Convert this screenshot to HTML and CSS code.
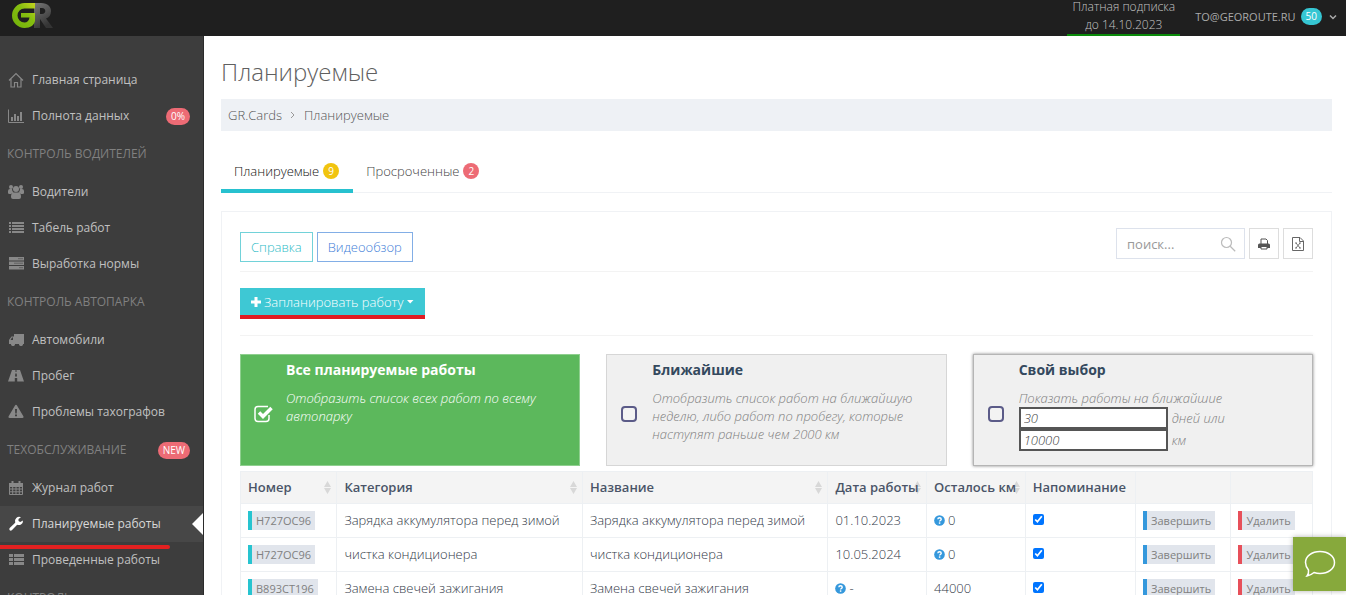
FILE: index.html
```html
<!DOCTYPE html>
<html lang="ru">
<head>
<meta charset="utf-8">
<title>Планируемые</title>
<link rel="stylesheet" href="styles.css">
</head>
<body>
<svg class="sprite" aria-hidden="true">
  <symbol id="i-help" viewBox="0 0 12 12"><circle cx="6" cy="6" r="5.800" fill="#3598dc"/><path d="M4.200 4.700c0-2.300 3.700-2.200 3.700-.1 0 1.400-1.800 1.400-1.800 2.600" fill="none" stroke="#fff" stroke-width="1.500"/><rect x="5.300" y="8" width="1.600" height="1.600" fill="#fff"/></symbol>
</svg>
<header class="topbar">
  <a href="#" class="logo" aria-label="GR">
    <svg width="42" height="28" viewBox="0 0 42 28">
      <defs>
        <linearGradient id="lg" x1="0" y1="1" x2="1" y2="0"><stop offset="0" stop-color="#6fb00a"/><stop offset=".6" stop-color="#86be10"/><stop offset="1" stop-color="#c6d420"/></linearGradient>
        <linearGradient id="lr" x1="0" y1="0" x2=".5" y2="1"><stop offset="0" stop-color="#777"/><stop offset="1" stop-color="#343434"/></linearGradient>
      </defs>
      <path d="M22 0h7c7 0 10 4 10 8 0 4-2 6.500-5 7.500L41 25h-7l-6-9v9h-6zM28 5v6h2c4.500 0 4.500-6 0-6z" fill="url(#lr)" fill-rule="evenodd"/>
      <path d="M23 0H12.500a12.500 12.500 0 0 0 0 25C19 25 22 22 23 18V10H9v4.500h8.500c-.5 3.500-2.500 5-5 5a7 7 0 0 1 0-14H23z" fill="url(#lg)"/>
    </svg>
  </a>
  <div class="plan">Платная подписка<br>до 14.10.2023</div>
  <button class="account" type="button">TO@GEOROUTE.RU <span class="pill pill-cyan">50</span>
    <svg width="8" height="6" viewBox="0 0 8 6"><path d="M1 1.500l3 3 3-3" fill="none" stroke="#aaa" stroke-width="1.500"/></svg>
  </button>
</header>
<div class="page">
  <nav class="sidebar">
    <a href="#" class="item"><svg class="ico" viewBox="0 0 16 16"><path d="M1 8.500L8 1.500l7 7M3 7v8h3.500v-4.500h3V15H13V7" fill="none" stroke="currentColor" stroke-width="1.200"/></svg>Главная страница</a>
    <a href="#" class="item"><svg class="ico" viewBox="0 0 16 16"><path d="M.5 1.500v13H16" fill="none" stroke="currentColor"/><path d="M3 9h2v4H3zM6 6h2v7H6zM9 8h2v5H9zM12 4h2v9h-2z" fill="currentColor"/></svg>Полнота данных<span class="pill pill-red end">0%</span></a>
    <h3 class="group">КОНТРОЛЬ ВОДИТЕЛЕЙ</h3>
    <a href="#" class="item"><svg class="ico" viewBox="0 0 16 16"><g fill="currentColor"><circle cx="3" cy="3" r="2"/><circle cx="13" cy="3" r="2"/><circle cx="8" cy="5" r="3"/><path d="M0 9V7q0-2 2-2h2q0 2 1.500 3.500Q4 8.500 3 10H1.500Q0 10 0 9zM16 9V7q0-2-2-2h-2q0 2-1.500 3.500Q12 8.500 13 10h1.500Q16 10 16 9zM3 13q0-4.500 2.500-4.500h5Q13 8.500 13 13q0 2-2 2H5q-2 0-2-2z"/></g></svg>Водители</a>
    <a href="#" class="item"><svg class="ico" viewBox="0 0 16 16"><path d="M1 2h2v2H1zM4 2h12v2H4zM1 5h2v2H1zM4 5h12v2H4zM1 8h2v2H1zM4 8h12v2H4zM1 11h2v2H1zM4 11h12v2H4z" fill="currentColor"/></svg>Табель работ</a>
    <a href="#" class="item"><svg class="ico" viewBox="0 0 16 16"><path d="M1 1h15v3.500H1zM1 5.500h15V9H1zM1 10h15v3.500H1z" fill="currentColor"/><path d="M10 2.700h5M6 7.200h9M11 11.700h4" stroke="#606060"/></svg>Выработка нормы</a>
    <h3 class="group">КОНТРОЛЬ АВТОПАРКА</h3>
    <a href="#" class="item"><svg class="ico" viewBox="0 0 16 16"><path d="M6 2h10v10h-1a2 2 0 0 1-4 0H7a2 2 0 0 1-4 0H1V8l2.500-3.500H6zM2.500 8H5V5.500H4z" fill="currentColor" fill-rule="evenodd"/><circle cx="5" cy="12.300" r="1.600" fill="currentColor"/><circle cx="13" cy="12.300" r="1.600" fill="currentColor"/></svg>Автомобили</a>
    <a href="#" class="item"><svg class="ico" viewBox="0 0 16 16"><path d="M4 2h3.500v2h1V2H12l4 11.500H9.200V10H6.800v3.500H0zM7.300 5.500L7 8.500h2l-.3-3z" fill="currentColor" fill-rule="evenodd"/></svg>Пробег</a>
    <a href="#" class="item"><svg class="ico" viewBox="0 0 16 16"><path d="M8 .8q.6 0 1 .8l6.500 11q.5 1.400-1 1.400h-13q-1.500 0-1-1.400l6.500-11q.4-.8 1-.8zM7 5l.3 4.500h1.400L9 5zM7 10.500v1.800h2v-1.800z" fill="currentColor" fill-rule="evenodd"/></svg>Проблемы тахографов</a>
    <h3 class="group">ТЕХОБСЛУЖИВАНИЕ<span class="pill pill-red end">NEW</span></h3>
    <a href="#" class="item"><svg class="ico" viewBox="0 0 16 16"><path d="M1.500 3.500h13v11h-13zM1.500 6.500h13M1.500 9h13M1.500 11.800h13M4.700 6v8.500M8 6v8.500M11.300 6v8.500" fill="none" stroke="currentColor"/><path d="M1 3h14v3H1zM3.500 1h2v3h-2zM10.500 1h2v3h-2z" fill="currentColor"/></svg>Журнал работ</a>
    <a href="#" class="item active"><svg class="ico" viewBox="0 0 16 16"><path d="M15 4.500a4.300 4.300 0 0 1-5.800 4.300l-5.400 5.400q-1 .9-2.100 0-.9-1 0-2.100L7.200 6.700A4.300 4.300 0 0 1 13 1.300L10.500 3v2l1.700 1z" fill="currentColor"/></svg>Планируемые работы<svg class="notch" width="11" height="22" viewBox="0 0 11 22"><path d="M11 0v22L0 11z" fill="#fff"/></svg></a>
    <a href="#" class="item"><svg class="ico" viewBox="0 0 16 16"><path d="M1 2h4v3H1zM6 2h10v3H6zM1 6h4v3H1zM6 6h10v3H6zM1 10h4v3H1zM6 10h10v3H6z" fill="currentColor"/></svg>Проведенные работы</a>
    <h3 class="group">КОНТРОЛЬ</h3>
  </nav>
  <main class="content">
    <h1>Планируемые</h1>
    <div class="crumbs"><a href="#">GR.Cards</a><svg width="6" height="8" viewBox="0 0 6 8"><path d="M1 1l3 3-3 3" fill="none" stroke="#999"/></svg><a href="#">Планируемые</a></div>
    <div class="tabs">
      <a href="#" class="tab current">Планируемые<span class="dot dot-yellow">9</span></a>
      <a href="#" class="tab">Просроченные<span class="dot dot-red">2</span></a>
    </div>
    <section class="panel">
      <div class="tools">
        <div class="links"><button type="button" class="btn cyan">Справка</button><button type="button" class="btn blue">Видеообзор</button></div>
        <div class="search">
          <div class="field"><input type="text" placeholder="поиск..." aria-label="Поиск"><svg width="16" height="16" viewBox="0 0 16 16"><circle cx="6.500" cy="6.500" r="5" fill="none" stroke="#bbb" stroke-width="1.200"/><path d="M10.200 10.200l5 5" stroke="#bbb" stroke-width="1.300"/></svg></div>
          <button type="button" class="square" aria-label="Печать"><svg width="12" height="12" viewBox="0 0 12 12"><path d="M3 6V1h5l1.500 1.500V6" fill="none" stroke="#555"/><path d="M0 7q0-1.500 1.500-1.500h9Q12 5.500 12 7v3H0z" fill="#555"/><path d="M3 8.500h6V11H3z" fill="#fff" stroke="#555"/></svg></button>
          <button type="button" class="square" aria-label="Excel"><svg width="12" height="14" viewBox="0 0 12 14"><path d="M.5.500h7.500l3.500 3.500v9.500H.5zM7.500.5v4h4" fill="none" stroke="#666"/><path d="M4 6l4 5M8 6l-4 5M3 6h2M7 6h2M3 11h2M7 11h2" fill="none" stroke="#666" stroke-width=".9"/></svg></button>
        </div>
      </div>
      <div class="actions">
        <button type="button" class="primary"><svg width="10" height="10" viewBox="0 0 10 10"><path d="M5 0v10M0 5h10" stroke="#fff" stroke-width="3"/></svg>Запланировать работу<svg width="8" height="4" viewBox="0 0 8 4"><path d="M1 0h6.500L4.200 3.500z" fill="#fff"/></svg></button>
      </div>
      <div class="cards">
        <div class="card selected">
          <input type="checkbox" id="all" checked>
          <div><label for="all">Все планируемые работы</label><p>Отобразить список всех работ по всему автопарку</p></div>
        </div>
        <div class="card">
          <input type="checkbox" id="near">
          <div><label for="near">Ближайшие</label><p>Отобразить список работ на ближайшую неделю, либо работ по пробегу, которые наступят раньше чем 2000 км</p></div>
        </div>
        <div class="card hover">
          <input type="checkbox" id="own">
          <div><label for="own">Свой выбор</label><p>Показать работы на ближайшие</p>
            <div class="line"><input type="text" id="days" value="30"><label for="days">дней или</label></div>
            <div class="line"><input type="text" id="km" value="10000"><label for="km">км</label></div>
          </div>
        </div>
      </div>
      <table>
        <colgroup><col class="c-num"><col class="c-text"><col class="c-text"><col class="c-date"><col class="c-date"><col class="c-rem"><col class="c-done"><col class="c-del"></colgroup>
        <thead><tr><th class="sort">Номер</th><th class="sort">Категория</th><th class="sort">Название</th><th class="sort">Дата работы</th><th class="sort">Осталось км</th><th>Напоминание</th><th></th><th></th></tr></thead>
        <tbody>
          <tr><td><a href="#" class="tag">Н727ОС96</a></td><td>Зарядка аккумулятора перед зимой</td><td>Зарядка аккумулятора перед зимой</td><td>01.10.2023</td><td><svg class="help"><use href="#i-help"/></svg>0</td><td><input type="checkbox" checked aria-label="Напоминание"></td><td><button type="button" class="tag done">Завершить</button></td><td><button type="button" class="tag del">Удалить</button></td></tr>
          <tr><td><a href="#" class="tag">Н727ОС96</a></td><td>чистка кондиционера</td><td>чистка кондиционера</td><td>10.05.2024</td><td><svg class="help"><use href="#i-help"/></svg>0</td><td><input type="checkbox" checked aria-label="Напоминание"></td><td><button type="button" class="tag done">Завершить</button></td><td><button type="button" class="tag del">Удалить</button></td></tr>
          <tr><td><a href="#" class="tag">В893СТ196</a></td><td>Замена свечей зажигания</td><td>Замена свечей зажигания</td><td><svg class="help"><use href="#i-help"/></svg>-</td><td>44000</td><td><input type="checkbox" checked aria-label="Напоминание"></td><td><button type="button" class="tag done">Завершить</button></td><td><button type="button" class="tag del">Удалить</button></td></tr>
        </tbody>
      </table>
    </section>
  </main>
</div>
<button type="button" class="chat" aria-label="Чат"><svg width="32" height="28" viewBox="0 0 32 28"><path d="M4.500 20A12 12 0 0 1 1.500 12.500C1.500 6 8 1.500 16 1.500S30.500 6 30.500 12.500 24 23.500 16 23.500q-3 0-6-1-3.500 3-7 3.500 2-2.500 1.500-6z" fill="none" stroke="#fff" stroke-width="1.500"/></svg></button>
</body>
</html>
```
FILE: styles.css
```css
* { box-sizing: border-box; }
body { margin: 0; height: 100vh; overflow: hidden; display: flex; flex-direction: column; font: 300 13px/18px "Open Sans", sans-serif; color: #444; background: #fff; }
a { color: inherit; text-decoration: none; }
button, input { font: inherit; color: inherit; margin: 0; }
button { cursor: pointer; }
svg { flex: none; }
.sprite { position: absolute; width: 0; height: 0; }

.topbar { height: 36px; flex: none; display: flex; background: #1f1f1f; color: #c4c4c4; font-size: 12px; }
.logo { margin: 3px auto 0 12px; }
.plan { height: 36px; padding: 0 5px; display: flex; flex-direction: column; justify-content: flex-end; text-align: center; border-bottom: 2px solid #0a8a0a; }
.account { display: flex; align-items: center; gap: 5px; margin-left: 15px; padding: 0 9px 3px 0; border: 0; background: none; font-size: 11px; font-weight: 400; color: #aaa; }
.account svg { margin-left: 2px; }
.pill { border-radius: 9px; padding: 0 5px; font-size: 10px; font-weight: 400; line-height: 17px; color: #fff; }
.pill-cyan { background: #36c6d3; }
.pill-red { background: #ed6b75; }
.end { margin-left: auto; }

.page { flex: 1; min-height: 0; display: flex; }
.sidebar { position: relative; width: 204px; flex: none; padding-top: 26px; background: #3d3d3d; overflow: hidden; border-right: 1px solid #2b2b2b; }
.item { display: flex; align-items: center; height: 36px; padding: 0 13px 0 8px; font-size: 12px; font-weight: 400; color: #c0c0c0; }
.ico { width: 16px; height: 16px; margin-right: 8px; color: #888; }
.group { display: flex; align-items: center; height: 40px; margin: 0; padding: 0 13px 0 7px; font-size: 12px; font-weight: 400; color: #808080; }
.active { position: relative; background: #474747; color: #d8d8d8; }
.active .ico { color: #fff; }
.notch { position: absolute; right: 0; top: 7px; }
.active::after { content: ""; position: absolute; left: 0; bottom: -7px; width: 170px; height: 4px; border-radius: 0 2px 2px 0; background: #e32020; z-index: 1; }

.content { flex: 1; min-width: 0; padding: 20px 14px 0 17px; }
h1 { margin: 0; font-size: 24px; line-height: 32px; font-weight: 300; color: #606060; }
.crumbs { display: flex; align-items: center; gap: 8px; height: 32px; margin-top: 11px; padding: 0 7px; background: #eef1f5; color: #555; }
.tabs { display: flex; margin-top: 20px; border-bottom: 1px solid #f0f2f5; }
.tab { display: flex; align-items: center; gap: 4px; height: 42px; padding: 2px 14px 0 13px; border-bottom: 4px solid transparent; margin-bottom: -1px; color: #444; }
.current { border-color: #27c1cf; color: #111; }
.dot { width: 16px; height: 16px; border-radius: 50%; font-size: 10px; font-weight: 400; line-height: 16px; text-align: center; color: #fff; }
.dot-yellow { background: #f1c40f; }
.dot-red { background: #ed6b75; }

.panel { margin-top: 18px; border: 1px solid #f0f2f5; padding: 16px 18px; }
.tools { display: flex; justify-content: space-between; padding-bottom: 9px; border-bottom: 1px solid #f3f3f3; }
.links { display: flex; gap: 4px; padding-top: 4px; }
.btn { height: 30px; padding: 0 10px; background: #fff; border: 1px solid; }
.cyan { color: #2fbcc7; border-color: #72d2d9; }
.blue { color: #3f80d8; border-color: #82aee6; }
.search { display: flex; gap: 4px; }
.field { display: flex; align-items: center; width: 129px; height: 31px; padding: 0 8px 0 10px; border: 1px solid #dde2ec; }
.field input { flex: 1; min-width: 0; padding: 0; border: 0; outline: 0; font-weight: 400; }
.field input::placeholder { color: #999; opacity: 1; }
.square { display: flex; align-items: center; justify-content: center; width: 30px; height: 31px; padding: 0; border: 1px solid #ddd; background: #fff; }
.actions { padding: 16px 0; border-bottom: 1px solid #f3f3f3; }
.primary { display: flex; align-items: center; gap: 3px; height: 31px; padding: 0 11px; border: 0; background: #3ec8d4; color: #fff; border-bottom: 4px solid #e01b22; }
.cards { display: grid; grid-template-columns: repeat(3, 1fr); gap: 26px; margin-top: 18px; }
.card { display: flex; align-items: center; min-height: 112px; padding: 6px 30px 6px 13px; border: 1px solid #d6d6d6; background: #f0f0f0; color: #808080; }
.card > div { flex: 1; align-self: flex-start; }
.card > input { appearance: none; width: 16px; height: 16px; margin: 7px 15px 0 1px; border: 2px solid #5b5b88; border-radius: 4px; background: #f3f3f3; flex: none; }
.card > div > label { display: block; margin-bottom: 10px; font-size: 14px; font-weight: 700; color: #34495e; }
.card p { margin: 0; font-style: italic; }
.card.selected { background: #5cb85c; border-color: #8fcf8f; color: #fff; }
.card.selected > div > label { color: #fff; }
.card.selected > input { width: 19px; height: 19px; margin: 7px 13px 0 0; border: 0; background: url("data:image/svg+xml,%3Csvg xmlns='http://www.w3.org/2000/svg' viewBox='0 0 19 19'%3E%3Cpath d='M15 11v3.500q0 3-3 3H4q-3 0-3-3v-9q0-3 3-3h10' fill='none' stroke='white' stroke-width='1.500'/%3E%3Cpath d='M5 8.500l4 4L17.500 4' fill='none' stroke='white' stroke-width='3.500'/%3E%3C/svg%3E"); }
.hover { border-color: #b5b5b5; box-shadow: 0 0 3px #888; }
.line { display: flex; align-items: center; gap: 4px; font-style: italic; }
.line input { width: 149px; height: 22px; padding: 0 3px; border: 2px solid #555; background: #fff; color: #444; }

table { width: 100%; margin-top: 5px; table-layout: fixed; border-collapse: collapse; color: #333a48; }
.c-num { width: 9%; }
.c-text { width: 22.9%; }
.c-date { width: 9.2%; }
.c-rem { width: 10.3%; }
.c-done { width: 8.9%; }
.c-del { width: 7.6%; }
th, td { height: 34px; padding: 0 7px 2px; border: 1px solid #edf0f3; text-align: left; white-space: nowrap; }
th { height: 32px; font-weight: 600; color: #4a5468; background: #f4f4f4; }
.sort { background: #f4f4f4 url("data:image/svg+xml,%3Csvg xmlns='http://www.w3.org/2000/svg' width='7' height='13'%3E%3Cpath d='M3.500 0L7 6H0zM3.500 13L7 7H0z' fill='%23d8d8d8'/%3E%3C/svg%3E") no-repeat right 5px center; }
td input { display: block; width: 11px; height: 11px; accent-color: #0075ff; }
.tag { display: inline-block; height: 19px; padding: 0 4px; border: 0; border-left: 4px solid #27c4d0; background: #e1e5ec; color: #808080; font-size: 11px; font-weight: 400; line-height: 19px; vertical-align: middle; }
.done { border-color: #3598dc; }
.del { border-color: #e7505a; }
.help { width: 11px; height: 11px; margin-right: 3px; vertical-align: -1px; }
.chat { position: fixed; right: 0; bottom: 4px; width: 53px; height: 54px; padding: 0; border: 0; background: #87a93c; box-shadow: 0 0 5px rgba(0, 0, 0, .3); }
.chat svg { display: block; margin: 0 auto; }
```
